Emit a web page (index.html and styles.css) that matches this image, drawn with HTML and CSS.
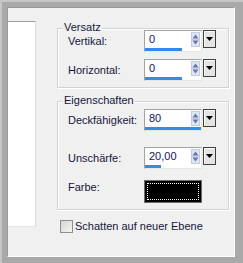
FILE: index.html
```html
<!DOCTYPE html>
<html lang="de">
<head>
    <meta charset="UTF-8">
    <title>Schatten</title>
    <link rel="stylesheet" href="styles.css">
</head>
<body>

    <div class="window">
        <div class="panel">
            <div class="preview"></div>

            <div class="options">
                <div class="group group-offset">
                    <div class="group-title">Versatz</div>
                    <div class="row">
                        <span class="label">Vertikal:</span>
                        <div class="spin">
                            <div class="spin-field">
                                <div class="spin-input">
                                    <span class="spin-value">0</span>
                                    <svg class="spin-arrows" width="9" height="15" viewBox="0 0 9 15">
                                        <rect x="0.5" y="0.5" width="8" height="14" fill="#dfe5f1" stroke="#c3cce0"/>
                                        <polygon points="1.5,6.5 4.5,2.5 7.5,6.5" fill="#6677b4"/>
                                        <line x1="1" y1="7.5" x2="8" y2="7.5" stroke="#c3cce0"/>
                                        <polygon points="1.5,8.5 4.5,12.5 7.5,8.5" fill="#6677b4"/>
                                    </svg>
                                </div>
                                <div class="spin-bar"><div class="spin-fill" style="width: 37px"></div></div>
                            </div>
                            <div class="spin-drop">
                                <svg width="11" height="16" viewBox="0 0 11 16"><polygon points="2,6 9,6 5.5,10" fill="#000"/></svg>
                            </div>
                        </div>
                    </div>
                    <div class="row row-next">
                        <span class="label">Horizontal:</span>
                        <div class="spin">
                            <div class="spin-field">
                                <div class="spin-input">
                                    <span class="spin-value">0</span>
                                    <svg class="spin-arrows" width="9" height="15" viewBox="0 0 9 15">
                                        <rect x="0.5" y="0.5" width="8" height="14" fill="#dfe5f1" stroke="#c3cce0"/>
                                        <polygon points="1.5,6.5 4.5,2.5 7.5,6.5" fill="#6677b4"/>
                                        <line x1="1" y1="7.5" x2="8" y2="7.5" stroke="#c3cce0"/>
                                        <polygon points="1.5,8.5 4.5,12.5 7.5,8.5" fill="#6677b4"/>
                                    </svg>
                                </div>
                                <div class="spin-bar"><div class="spin-fill" style="width: 37px"></div></div>
                            </div>
                            <div class="spin-drop">
                                <svg width="11" height="16" viewBox="0 0 11 16"><polygon points="2,6 9,6 5.5,10" fill="#000"/></svg>
                            </div>
                        </div>
                    </div>
                </div>

                <div class="group group-props">
                    <div class="group-title">Eigenschaften</div>
                    <div class="row">
                        <span class="label">Deckfähigkeit:</span>
                        <div class="spin">
                            <div class="spin-field">
                                <div class="spin-input">
                                    <span class="spin-value">80</span>
                                    <svg class="spin-arrows" width="9" height="15" viewBox="0 0 9 15">
                                        <rect x="0.5" y="0.5" width="8" height="14" fill="#dfe5f1" stroke="#c3cce0"/>
                                        <polygon points="1.5,6.5 4.5,2.5 7.5,6.5" fill="#6677b4"/>
                                        <line x1="1" y1="7.5" x2="8" y2="7.5" stroke="#c3cce0"/>
                                        <polygon points="1.5,8.5 4.5,12.5 7.5,8.5" fill="#6677b4"/>
                                    </svg>
                                </div>
                                <div class="spin-bar"><div class="spin-fill" style="width: 56px"></div></div>
                            </div>
                            <div class="spin-drop">
                                <svg width="11" height="16" viewBox="0 0 11 16"><polygon points="2,6 9,6 5.5,10" fill="#000"/></svg>
                            </div>
                        </div>
                    </div>
                    <div class="row row-blur">
                        <span class="label">Unschärfe:</span>
                        <div class="spin">
                            <div class="spin-field">
                                <div class="spin-input">
                                    <span class="spin-value">20,00</span>
                                    <svg class="spin-arrows" width="9" height="15" viewBox="0 0 9 15">
                                        <rect x="0.5" y="0.5" width="8" height="14" fill="#dfe5f1" stroke="#c3cce0"/>
                                        <polygon points="1.5,6.5 4.5,2.5 7.5,6.5" fill="#6677b4"/>
                                        <line x1="1" y1="7.5" x2="8" y2="7.5" stroke="#c3cce0"/>
                                        <polygon points="1.5,8.5 4.5,12.5 7.5,8.5" fill="#6677b4"/>
                                    </svg>
                                </div>
                                <div class="spin-bar"><div class="spin-fill" style="width: 16px"></div></div>
                            </div>
                            <div class="spin-drop">
                                <svg width="11" height="16" viewBox="0 0 11 16"><polygon points="2,6 9,6 5.5,10" fill="#000"/></svg>
                            </div>
                        </div>
                    </div>
                    <div class="row row-color">
                        <span class="label">Farbe:</span>
                        <div class="swatch"><div class="swatch-focus"></div></div>
                    </div>
                </div>

                <label class="check">
                    <span class="check-box"></span>
                    Schatten auf neuer Ebene
                </label>
            </div>
        </div>
    </div>

</body>
</html>
```

FILE: styles.css
```css
html, body {
    margin: 0;
    padding: 0;
    background-color: #a9a9a9;
}
body {
    font-family: 'Liberation Sans', Arial, sans-serif;
    font-size: 11px;
    line-height: 13px;
    color: #16163c;
}
.window {
    box-sizing: border-box;
    width: 243px;
    height: 263px;
    border-top: 2px solid #c6c6c6;
    border-left: 2px solid #c6c6c6;
    padding: 5px 0 0 5px;
}
.panel {
    box-sizing: border-box;
    width: 228px;
    height: 250px;
    background-color: #f0f0f0;
    border-top: 1px solid #989898;
    border-left: 1px solid #989898;
    border-right: 1px solid #ffffff;
    border-bottom: 1px solid #ffffff;
    display: flex;
    align-items: flex-start;
}
.preview {
    box-sizing: border-box;
    width: 28px;
    height: 206px;
    margin-top: 13px;
    background-color: #ffffff;
    border-top: 1px solid #9e9e9e;
    border-right: 1px solid #dcdcdc;
    border-bottom: 1px solid #e4e4e4;
}
.options {
    width: 172px;
    margin-left: 21px;
    padding-top: 20px;
}
.group {
    border: 1px solid #d3d3d3;
    box-shadow: 1px 1px 0 #ffffff, inset 1px 1px 0 #ffffff;
    padding: 0 0 6px 10px;
}
.group-props {
    margin-top: 13px;
}
.group-title {
    width: max-content;
    margin: -8px 0 -4px -5px;
    padding: 0 1px;
    background-color: #f0f0f0;
}
.group-props .group-title {
    margin-bottom: 2px;
}
.row {
    display: flex;
    align-items: center;
    height: 22px;
}
.row-next {
    margin-top: 7px;
}
.row-blur {
    margin-top: 16px;
}
.row-color {
    margin-top: 11px;
    height: 23px;
    align-items: flex-start;
}
.row-color .label {
    padding-top: 1px;
}
.label {
    width: 76px;
}
.spin {
    display: flex;
    align-items: flex-start;
}
.spin-field {
    box-sizing: border-box;
    width: 58px;
    height: 22px;
    background-color: #ffffff;
    border-top: 1px solid #a3a3a3;
    border-left: 1px solid #a3a3a3;
    border-right: 1px solid #e6e6e6;
    border-bottom: 1px solid #e6e6e6;
}
.spin-input {
    height: 17px;
    display: flex;
    justify-content: space-between;
    align-items: center;
}
.spin-value {
    padding-left: 4px;
    color: #14145a;
}
.spin-arrows {
    display: block;
    margin-right: 1px;
}
.spin-bar {
    height: 3px;
}
.spin-fill {
    height: 3px;
    background-color: #3389ec;
}
.spin-drop {
    box-sizing: border-box;
    width: 13px;
    height: 18px;
    margin-left: 1px;
    border: 1px solid #3e3e3e;
    background-color: #e4e4e4;
    box-shadow: inset 1px 1px 0 #ffffff;
}
.spin-drop svg {
    display: block;
}
.swatch {
    box-sizing: border-box;
    width: 58px;
    height: 23px;
    background-color: #000000;
    border: 1px solid #6e6e6e;
    padding: 2px;
}
.swatch-focus {
    box-sizing: border-box;
    height: 100%;
    border: 1px dotted #ffffff;
}
.check {
    display: flex;
    align-items: center;
    margin: 10px 0 0 3px;
    color: #16163c;
}
.check-box {
    box-sizing: border-box;
    width: 13px;
    height: 13px;
    margin-right: 2px;
    border: 1px solid #8e8e8e;
    background: linear-gradient(135deg, #d4d4d4, #f4f4f4);
}
```
